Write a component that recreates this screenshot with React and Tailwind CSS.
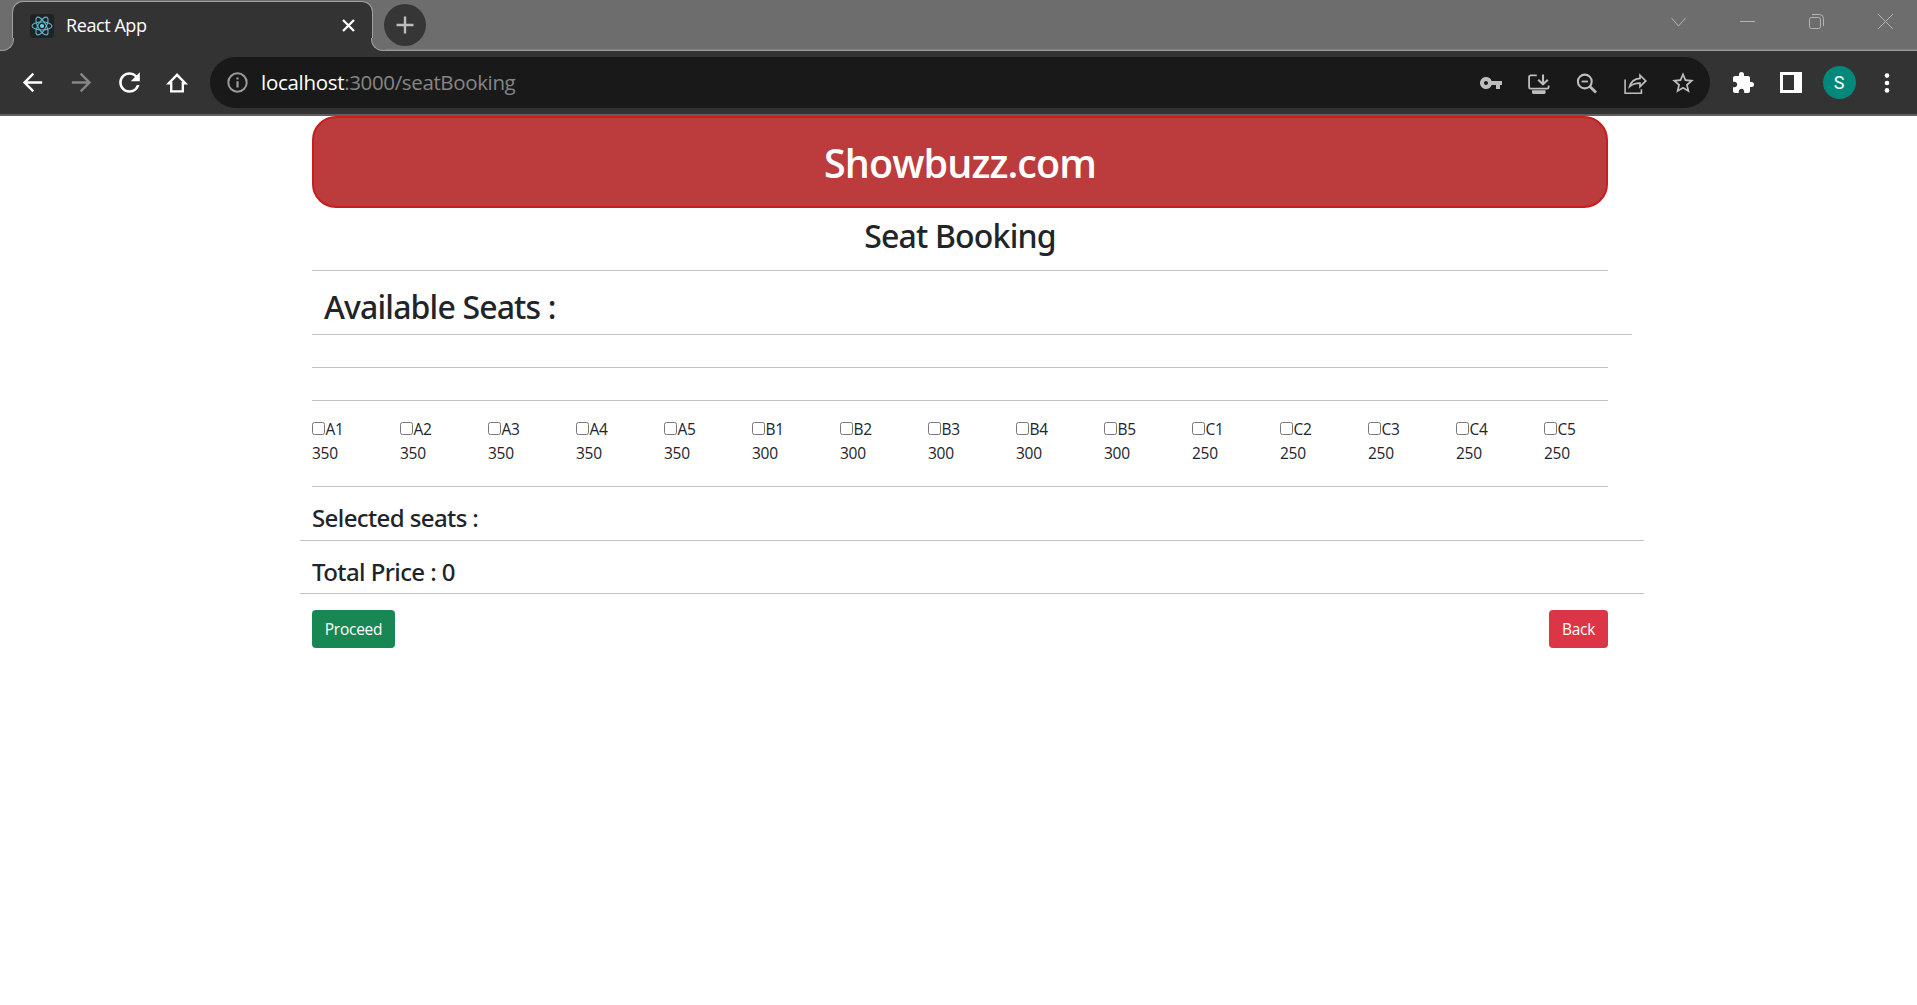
import React from "react";
import { MdVpnKey, MdStarOutline, MdExtension, MdRefresh, MdArrowBack, MdArrowForward } from "react-icons/md";

const seats = [
  ["A", 350],
  ["B", 300],
  ["C", 250],
].flatMap(([row, price]) => [1, 2, 3, 4, 5].map((n) => ({ id: `${row}${n}`, price })));

function TabStrip() {
  return (
    <header className="relative flex h-[51px] items-start bg-[#6d6d6d]">
      <div className="absolute inset-x-0 bottom-0 h-[2px] border-b border-[#9c9c9c] bg-[#7e7e7e]" />
      <div className="relative ml-3 mt-px flex h-[50px] w-[361px] shrink-0 items-center rounded-t-[11px] border border-b-0 border-[#a0a0a0] bg-[#333] pb-px pl-[17px] pr-[17px]">
        <span className="flex size-6 items-center justify-center rounded-[3px] bg-[#202326]">
          <svg width="22" height="22" viewBox="-11 -11 22 22" fill="none" stroke="#61b8cf" strokeWidth="1.1">
            <circle r="2" fill="#61dafb" stroke="none" />
            <ellipse rx="10" ry="4" />
            <ellipse rx="10" ry="4" transform="rotate(60)" />
            <ellipse rx="10" ry="4" transform="rotate(120)" />
          </svg>
        </span>
        <span className="-mt-0.5 ml-3 text-[18px] leading-6 tracking-[-0.42px] text-white">React App</span>
        <svg className="-mt-px ml-auto" width="13" height="13" viewBox="0 0 13 13" stroke="#fff" strokeWidth="2.3">
          <path d="M1 1L12 12M12 1L1 12" />
        </svg>
        <span className="absolute -left-[13px] bottom-0 h-[13px] w-[14px] bg-[#333]">
          <span className="block size-full rounded-br-[12px] border-b border-r border-[#a0a0a0] bg-[#6d6d6d]" />
        </span>
        <span className="absolute -right-[13px] bottom-0 h-[13px] w-[14px] bg-[#333]">
          <span className="block size-full rounded-bl-[12px] border-b border-l border-[#a0a0a0] bg-[#6d6d6d]" />
        </span>
      </div>
      <button className="relative ml-[11px] mt-1 flex size-[42px] items-center justify-center rounded-full bg-[#363636]">
        <svg width="18" height="18" viewBox="0 0 18 18" stroke="#bdbdbd" strokeWidth="2.4">
          <path d="M9 0.5V17.5M0.5 9H17.5" />
        </svg>
      </button>
      <div className="relative ml-auto mr-[23px] mt-[13px] flex items-center gap-[52px]">
        {["M1.5 5L8.5 13L15.5 5", "M1 8.5H16", "M3.5 4.5H10.5Q12.5 4.5 12.5 6.5V13.5Q12.5 15.5 10.5 15.5H3.5Q1.5 15.5 1.5 13.5V6.5Q1.5 4.5 3.5 4.5M4 1.5H11.5Q15.5 1.5 15.5 5.5V13", "M1 1L16 16M16 1L1 16"].map((d) => (
          <svg key={d} width="17" height="17" viewBox="0 0 17 17" fill="none" stroke="#b4b4b4">
            <path d={d} />
          </svg>
        ))}
      </div>
    </header>
  );
}

function Slot({ children }) {
  return <span className="flex w-12 shrink-0 items-center justify-center">{children}</span>;
}

function LineIcon({ d, children, width = 2.2 }) {
  return (
    <svg width="24" height="24" viewBox="0 0 24 24" fill="none" stroke="currentColor" strokeWidth={width}>
      <path d={d} />
      {children}
    </svg>
  );
}

function Toolbar() {
  return (
    <nav className="flex h-[65px] items-center border-b-2 border-[#5f5f5f] bg-[#333] pl-[9px] pr-[6px] text-white">
      <Slot><MdArrowBack size={29} className="mr-px" /></Slot>
      <Slot><MdArrowForward size={29} className="text-[#868686]" /></Slot>
      <Slot><MdRefresh size={31} /></Slot>
      <Slot><LineIcon d="M12 3.8L3.8 12.2H6.2V20.4H17.8V12.2H20.2Z" width={2.4} /></Slot>
      <div className="ml-[9px] flex h-[51px] flex-1 items-center rounded-full bg-[#191919] pl-[17px] pr-[3px] text-[#bdbdbd]">
        <svg width="21" height="21" viewBox="0 0 21 21" fill="none" stroke="#9b9b9b" strokeWidth="2">
          <circle cx="10.5" cy="10.5" r="9.2" />
          <path d="M10.5 9.3V15.5M10.5 5.5V7.6" strokeWidth="2.2" />
        </svg>
        <span className="-mt-0.5 ml-[13px] text-[20.5px] leading-7 tracking-[-0.36px] text-[#868686]">
          <span className="tracking-[-0.3px] text-white">localhost</span>:3000/seatBooking
        </span>
        <span className="ml-auto flex">
          <Slot><MdVpnKey size={24} /></Slot>
          <Slot>
            <LineIcon d="M9.8 4.4H3.8Q2.1 4.4 2.1 6V16Q2.1 17.6 3.8 17.6H20Q21.6 17.6 21.6 16V14.6" width={1.8}>
              <path d="M16 3.4V13M11.2 8.8L16 13.4L20.8 8.8" strokeWidth="2.1" />
              <path d="M5 19.2H18.6V21.5Q18.6 23 17 23H6.6Q5 23 5 21.5Z" fill="currentColor" stroke="none" />
            </LineIcon>
          </Slot>
          <Slot>
            <LineIcon d="M6.6 10.5H13" width={1.8}>
              <circle cx="9.8" cy="10.5" r="6.9" strokeWidth="2.1" />
              <path d="M14.6 15.3L21 21.6" strokeWidth="2.8" />
            </LineIcon>
          </Slot>
          <Slot>
            <LineIcon d="M2.1 8.5V22.2H18.4V18.2" width={1.6}>
              <path d="M6.6 15.6C8 10.4 11.8 7.8 17 7.4V4.2L22.8 9.9L17 15.6V12.2C12.4 12.1 9.4 13.2 6.6 15.6Z" strokeWidth="1.7" />
            </LineIcon>
          </Slot>
          <Slot><MdStarOutline size={26} /></Slot>
        </span>
      </div>
      <span className="ml-[9px] flex">
        <Slot><MdExtension size={24} /></Slot>
        <Slot>
          <span className="flex h-[21px] w-[22px] border-[3px] border-r-8 border-white" />
        </Slot>
        <Slot>
          <span className="flex size-[33px] items-center justify-center rounded-full bg-[#00897b] font-[Roboto,sans-serif] text-[18px] leading-none">S</span>
        </Slot>
        <Slot>
          <svg width="6" height="20" viewBox="0 0 6 20" fill="currentColor">
            <circle cx="3" cy="2.6" r="2.3" />
            <circle cx="3" cy="10" r="2.3" />
            <circle cx="3" cy="17.4" r="2.3" />
          </svg>
        </Slot>
      </span>
    </nav>
  );
}

function Rule({ className = "" }) {
  return <hr className={`h-px border-0 bg-[#c0c1c2] ${className}`} />;
}

function SeatBooking() {
  return (
    <main className="ml-[312px] w-[1296px] text-[#212529]">
      <h1 className="flex h-[92px] items-center justify-center rounded-3xl border-2 border-[#c91c1c] bg-[#bc3c3e] pt-1 text-[39.5px] font-semibold leading-none tracking-[-0.9px] text-white">
        Showbuzz.com
      </h1>
      <h2 className="mt-[9px] text-center font-['Noto_Sans',sans-serif] text-[32px] font-medium leading-[38px] tracking-[-0.8px]">Seat Booking</h2>
      <Rule className="mt-[15px]" />
      <h2 className="ml-3 mt-[17px] font-['Noto_Sans',sans-serif] text-[32px] font-medium leading-[38px] tracking-[-0.85px]">Available Seats :</h2>
      <Rule className="-mr-6 mt-2" />
      <Rule className="mt-8" />
      <Rule className="mt-8" />
      <div className="mt-4 flex">
        {seats.map((seat) => (
          <div key={seat.id} className="w-[88px] shrink-0 text-[15.5px] leading-6 tracking-[-0.25px]">
            <label className="flex items-center">
              <input type="checkbox" className="mb-[1px] mr-[0.5px] size-[13px] shrink-0" />
              {seat.id}
            </label>
            <div>{seat.price}</div>
          </div>
        ))}
      </div>
      <Rule className="mt-[21px]" />
      <h4 className="mt-4 font-['Noto_Sans',sans-serif] text-[24px] font-medium leading-[29px] tracking-[-0.6px]">Selected seats :</h4>
      <Rule className="-ml-3 -mr-9 mt-2" />
      <h4 className="mt-4 font-['Noto_Sans',sans-serif] text-[24px] font-medium leading-[29px] tracking-[-0.58px]">Total Price : 0</h4>
      <Rule className="-ml-3 -mr-9 mt-[7px]" />
      <div className="mt-4 flex justify-between text-[15.5px] leading-6 tracking-[-0.25px] text-white">
        <button className="h-[38px] w-[83px] rounded bg-[#198754]">Proceed</button>
        <button className="h-[38px] w-[59px] rounded bg-[#dc3545]">Back</button>
      </div>
    </main>
  );
}

export default function App() {
  return (
    <div className="h-[1005px] overflow-hidden bg-white font-['Open_Sans',sans-serif]">
      <TabStrip />
      <Toolbar />
      <SeatBooking />
    </div>
  );
}
